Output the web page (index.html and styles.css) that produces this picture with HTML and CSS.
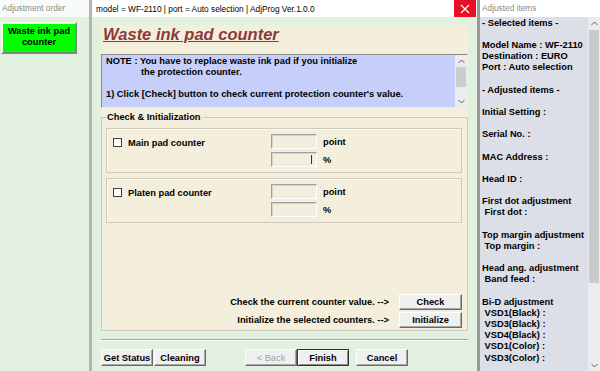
FILE: index.html
```html
<!DOCTYPE html>
<html lang="en">
<head>
    <meta charset="UTF-8">
    <meta name="viewport" content="width=device-width, initial-scale=1.0">
    <title>Waste ink pad counter</title>
    <link rel="stylesheet" href="styles.css">
</head>
<body>
    <aside class="order-pane">
        <div class="pane-title">Adjustment order</div>
        <button class="order-item">Waste ink pad<br>counter</button>
    </aside>

    <main class="window">
        <div class="titlebar">
            <span class="titlebar-text">model = WF-2110 | port = Auto selection | AdjProg Ver.1.0.0</span>
            <button class="close-btn" title="Close">
                <svg width="10" height="10" viewBox="0 0 10 10"><path d="M1 1L9 9M9 1L1 9" stroke="#fff" stroke-width="1.1"/></svg>
            </button>
        </div>
        <div class="client">
            <div class="panel">
                <h1 class="panel-title">Waste ink pad counter</h1>

                <div class="note">
                    <div class="note-text">
                        <p>NOTE : You have to replace waste ink pad if you initialize</p>
                        <p class="indent">the protection counter.</p>
                        <p>&nbsp;</p>
                        <p>1) Click [Check] button to check current protection counter's value.</p>
                    </div>
                    <div class="vscroll">
                        <span class="arrow"><svg width="7" height="5" viewBox="0 0 7 5"><polyline points="0.5,4 3.5,1 6.5,4" fill="none" stroke="#606060"/></svg></span>
                        <span class="track"><span class="thumb note-thumb"></span></span>
                        <span class="arrow"><svg width="7" height="5" viewBox="0 0 7 5"><polyline points="0.5,1 3.5,4 6.5,1" fill="none" stroke="#606060"/></svg></span>
                    </div>
                </div>

                <fieldset class="group">
                    <legend>Check &amp; Initialization</legend>

                    <div class="pad-box">
                        <label class="pad-check"><input type="checkbox"> Main pad counter</label>
                        <div class="pad-values">
                            <div class="value-row"><span class="value-box"></span>point</div>
                            <div class="value-row"><span class="value-box"><span class="caret"></span></span>%</div>
                        </div>
                    </div>

                    <div class="pad-box">
                        <label class="pad-check"><input type="checkbox"> Platen pad counter</label>
                        <div class="pad-values">
                            <div class="value-row"><span class="value-box"></span>point</div>
                            <div class="value-row"><span class="value-box"></span>%</div>
                        </div>
                    </div>

                    <div class="actions">
                        <div class="action-row">
                            <span>Check the current counter value. --&gt;</span>
                            <button class="btn">Check</button>
                        </div>
                        <div class="action-row">
                            <span>Initialize the selected counters. --&gt;</span>
                            <button class="btn">Initialize</button>
                        </div>
                    </div>
                </fieldset>
            </div>

            <div class="separator"></div>

            <div class="footer">
                <button class="btn">Get Status</button>
                <button class="btn">Cleaning</button>
                <button class="btn back" disabled>&lt; Back</button>
                <button class="btn default">Finish</button>
                <button class="btn cancel">Cancel</button>
            </div>
        </div>
    </main>

    <aside class="items-pane">
        <div class="pane-title">Adjusted items</div>
        <div class="items-body">
            <div class="items-text">- Selected items -

Model Name : WF-2110
Destination : EURO
Port : Auto selection

- Adjusted items -

Initial Setting :

Serial No. :

MAC Address :

Head ID :

First dot adjustment
 First dot :

Top margin adjustment
 Top margin :

Head ang. adjustment
 Band feed :

Bi-D adjustment
 VSD1(Black) :
 VSD3(Black) :
 VSD4(Black) :
 VSD1(Color) :
 VSD3(Color) :</div>
            <div class="vscroll">
                <span class="arrow"><svg width="7" height="5" viewBox="0 0 7 5"><polyline points="0.5,4 3.5,1 6.5,4" fill="none" stroke="#606060"/></svg></span>
                <span class="track"><span class="thumb items-thumb"></span></span>
                <span class="arrow"><svg width="7" height="5" viewBox="0 0 7 5"><polyline points="0.5,1 3.5,4 6.5,1" fill="none" stroke="#606060"/></svg></span>
            </div>
        </div>
    </aside>
</body>
</html>
```

FILE: styles.css
```css
* {
    box-sizing: border-box;
}
body {
    margin: 0;
    width: 600px;
    height: 371px;
    overflow: hidden;
    display: flex;
    font-family: 'Liberation Sans', Arial, sans-serif;
    font-size: 9.3px;
    font-weight: bold;
    color: #000;
    background: #e2f0e0;
}
button {
    font-family: inherit;
    font-size: 9.3px;
    font-weight: bold;
    color: #000;
    padding: 0;
}

/* side panes */
.pane-title {
    height: 17px;
    padding: 3px 2px 0;
    font-size: 8.3px;
    font-weight: normal;
    color: #8c8c8c;
    background: #f8fbf7;
}
.order-pane {
    width: 89px;
    flex: none;
    background: #e2f0e0;
}
.order-item {
    display: block;
    margin: 5px 0 0 1px;
    width: 76px;
    height: 32px;
    padding-bottom: 2px;
    line-height: 11px;
    background: #00ff00;
    border: 2px solid;
    border-color: #e8ffe8 #7a8a7a #7a8a7a #e8ffe8;
}
.items-pane {
    flex: 1;
    display: flex;
    flex-direction: column;
}
.items-pane .pane-title {
    background: #fff;
}
.items-body {
    flex: 1;
    display: flex;
    background: #dcdfe8;
}
.items-text {
    flex: 1;
    padding: 0.5px 0 0 2px;
    white-space: pre;
    line-height: 11.17px;
}

/* fake scrollbars */
.vscroll {
    width: 12px;
    flex: none;
    display: flex;
    flex-direction: column;
    background: #ececee;
}
.vscroll .arrow {
    height: 12px;
    display: flex;
    align-items: center;
    justify-content: center;
}
.vscroll .track {
    flex: 1;
    display: flex;
    flex-direction: column;
}
.thumb {
    display: block;
    margin: 0 1px;
    background: #cdcdcd;
}
.note-thumb {
    height: 20px;
}
.items-thumb {
    margin-top: 1px;
    height: 253px;
    background: #c9cace;
}

/* main window */
.window {
    width: 391px;
    flex: none;
    display: flex;
    flex-direction: column;
    border-left: 3px solid #b4b4b4;
    border-right: 3px solid #9a9a9a;
}
.titlebar {
    height: 17px;
    display: flex;
    align-items: center;
    background: #fff;
}
.titlebar-text {
    flex: 1;
    padding-left: 4px;
    font-size: 8.3px;
    font-weight: normal;
}
.close-btn {
    width: 22px;
    height: 17px;
    margin-right: 1px;
    border: 0;
    background: #e81123;
    display: flex;
    align-items: center;
    justify-content: center;
}
.client {
    flex: 1;
    padding: 8px 9px 0;
    background: #e2f0e0;
}
.panel {
    height: 306px;
    display: flex;
    flex-direction: column;
    background: #f4efdc;
}
.panel-title {
    margin: 0 0 10px;
    padding-left: 2px;
    font-size: 16.5px;
    line-height: 19px;
    font-style: italic;
    text-decoration: underline;
    color: #8b3a3a;
}
.note {
    height: 54px;
    flex: none;
    display: flex;
    background: #c6cffa;
    border: 1px solid;
    border-color: #8a8a8a #ececec #ececec #8a8a8a;
}
.note-text {
    flex: 1;
    padding: 0.5px 0 0 4px;
    overflow: hidden;
}
.note-text p {
    margin: 0;
    height: 11.3px;
    line-height: 11.3px;
    white-space: nowrap;
}
.note-text .indent {
    padding-left: 35px;
}

/* check & initialization group */
.group {
    flex: 1;
    min-width: 0;
    margin: 3px 0 0;
    padding: 5px 5px 2px 4px;
    border: 1px solid #cfcabb;
    display: flex;
    flex-direction: column;
    gap: 5px;
}
.group legend {
    padding: 0 1px;
    line-height: 12px;
}
.pad-box {
    display: flex;
    padding: 5px 6px;
    border: 1px solid #cfcabb;
    box-shadow: inset 1px 1px 0 #fbf9f2;
}
.pad-check {
    width: 158px;
    height: 17px;
    display: flex;
    align-items: center;
    gap: 6px;
}
.pad-check input {
    appearance: none;
    margin: 0;
    width: 9px;
    height: 9px;
    background: #fff;
    border: 1px solid #3c3c3c;
}
.pad-values {
    display: flex;
    flex-direction: column;
    gap: 3px;
}
.value-row {
    display: flex;
    align-items: center;
    gap: 6px;
}
.value-box {
    width: 46px;
    height: 15px;
    display: flex;
    align-items: center;
    justify-content: flex-end;
    padding-right: 4px;
    background: #f4efdc;
    border: 1px solid;
    border-color: #a0a0a0 #fff #fff #a0a0a0;
    box-shadow: inset 1px 1px 0 #d8d3c4;
}
.caret {
    width: 1px;
    height: 9px;
    background: #333;
}
.actions {
    margin-top: auto;
    display: flex;
    flex-direction: column;
    gap: 2px;
}
.action-row {
    display: flex;
    align-items: center;
    justify-content: flex-end;
    gap: 10px;
}

/* buttons */
.btn {
    width: 52px;
    height: 17px;
    background: #f0f0f0;
    border: 1px solid;
    border-color: #fff #6a6a6a #6a6a6a #fff;
    box-shadow: inset -1px -1px 0 #a8a8a8;
}
.action-row .btn {
    width: 63px;
    height: 16px;
}
.separator {
    margin-top: 8px;
    border-top: 1px solid #a6a6a6;
    border-bottom: 1px solid #fff;
}
.footer {
    display: flex;
    gap: 1px;
    margin-top: 8px;
}
.btn.back {
    margin-left: 38px;
    font-weight: normal;
    color: #a0a0a0;
}
.btn.default {
    margin-left: -1px;
    border: 1px solid #333;
    box-shadow: inset 1px 1px 0 #fff, inset -1px -1px 0 #8a8a8a;
}
.btn.cancel {
    margin-left: 6px;
}
```
